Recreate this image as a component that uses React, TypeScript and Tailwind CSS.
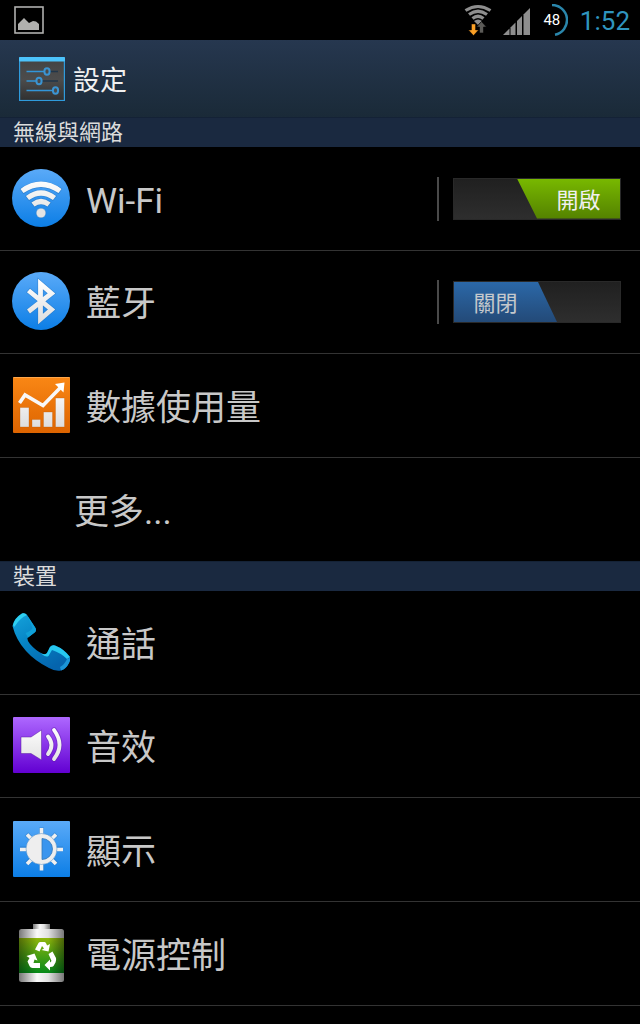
import { useState } from 'react'
import type { ReactNode } from 'react'
import { clsx } from 'clsx'

/* Status bar icons */

function PictureIcon() {
  return (
    <svg className="w-[30px] h-[28px]" viewBox="0 0 30 28" aria-hidden="true">
      <rect x="1" y="1" width="28" height="26" fill="none" stroke="#b0b0ae" strokeWidth="1.6" />
      <path d="M4 24v-6l6-6 5 5 4-2 3 .5 3 2.500V24z" fill="#b0b0ae" />
    </svg>
  )
}

function WifiStatusIcon() {
  return (
    <svg className="w-[28px] h-[32px]" viewBox="0 0 28 32" aria-hidden="true">
      <g fill="none" stroke="#8e8e8e" strokeWidth="3.2">
        <path d="M1.500 6.500Q14-1.500 26.500 6.500" />
        <path d="M5 10.500Q14 4 23 10.500" />
        <path d="M8.500 14.500Q14 10 19.500 14.500" />
      </g>
      <path d="M10 17Q14 14 18 17L14 21z" fill="#8e8e8e" />
      <path d="M7.500 20h4v6h3L9.500 31.500 4.500 26h3z" fill="#fba026" stroke="#000" strokeWidth=".4" />
      <path d="M15.500 29v-6H12.500l5-5.500 5 5.500h-3v6z" fill="#5c5b58" stroke="#000" strokeWidth=".6" />
    </svg>
  )
}

function SignalIcon() {
  return (
    <svg className="w-[27px] h-[27px]" viewBox="0 0 27 27" fill="#8e8e8e" aria-hidden="true">
      <path d="M0 27l6.500-6.500V27z" />
      <path d="M7.500 27v-7.500L12.500 14.500V27z" />
      <path d="M14 27V13l5-5v19z" />
      <path d="M20.500 27V6.500L27 0v27z" />
    </svg>
  )
}

/* Settings icons */

function SlidersIcon() {
  return (
    <svg className="w-[46px] h-[44px]" viewBox="0 0 46 44" aria-hidden="true">
      <defs>
        <linearGradient id="panel" x1="0" y1="0" x2="0" y2="1">
          <stop offset="0" stopColor="#434343" />
          <stop offset=".5" stopColor="#4c4c4c" />
          <stop offset="1" stopColor="#303030" />
        </linearGradient>
      </defs>
      <rect x=".6" y="1" width="44.800" height="42.500" fill="url(#panel)" stroke="#2f9bdc" strokeWidth="1.200" />
      <rect x="0" y="0" width="46" height="4.500" rx="1" fill="#4cc3fb" />
      <g strokeWidth="1.600">
        <path d="M27 14.500h12M19 24h20" stroke="#20364a" />
        <path d="M7.500 14.500H26M7.500 24H18M7.500 33.500H34" stroke="#3295d8" />
      </g>
      <g fill="#4a4a4a" stroke="#3b94d2" strokeWidth="2">
        <ellipse cx="28" cy="14.500" rx="2.600" ry="3.200" />
        <ellipse cx="20" cy="24" rx="2.600" ry="3.200" />
        <ellipse cx="36.500" cy="33.500" rx="2.600" ry="3.200" />
      </g>
    </svg>
  )
}

function Gradients() {
  return (
    <defs>
      <linearGradient id="blue" x1="0" y1="0" x2="0" y2="1">
        <stop offset="0" stopColor="#5aaaf8" />
        <stop offset="1" stopColor="#0c7ee6" />
      </linearGradient>
      <linearGradient id="orange" x1="0" y1="0" x2="0" y2="1">
        <stop offset="0" stopColor="#f98715" />
        <stop offset="1" stopColor="#dd6400" />
      </linearGradient>
      <linearGradient id="purple" x1="0" y1="0" x2="0" y2="1">
        <stop offset="0" stopColor="#ae68ff" />
        <stop offset="1" stopColor="#6200d2" />
      </linearGradient>
      <linearGradient id="white" gradientUnits="userSpaceOnUse" x1="0" y1="10" x2="0" y2="50">
        <stop offset="0" stopColor="#ffffff" />
        <stop offset="1" stopColor="#dedede" />
      </linearGradient>
      <linearGradient id="phone" x1="0" y1="0" x2=".6" y2="1">
        <stop offset="0" stopColor="#16a4dc" />
        <stop offset=".5" stopColor="#0583c4" />
        <stop offset="1" stopColor="#0564ad" />
      </linearGradient>
      <linearGradient id="metal" x1="0" y1="0" x2="1" y2="0">
        <stop offset="0" stopColor="#777" />
        <stop offset=".4" stopColor="#fafafa" />
        <stop offset=".65" stopColor="#e2e2e2" />
        <stop offset="1" stopColor="#777" />
      </linearGradient>
      <linearGradient id="charge" x1="0" y1="0" x2="0" y2="1">
        <stop offset="0" stopColor="#8fb60c" />
        <stop offset="1" stopColor="#068a1a" />
      </linearGradient>
      <linearGradient id="shade" x1="0" y1="0" x2="1" y2="0">
        <stop offset="0" stopColor="#000" stopOpacity=".4" />
        <stop offset=".4" stopColor="#000" stopOpacity="0" />
        <stop offset=".65" stopColor="#000" stopOpacity="0" />
        <stop offset="1" stopColor="#000" stopOpacity=".45" />
      </linearGradient>
    </defs>
  )
}

function RowIcon({ children }: { children: ReactNode }) {
  return (
    <svg className="w-[58px] h-[58px] shrink-0" viewBox="0 0 58 58" aria-hidden="true">
      <Gradients />
      {children}
    </svg>
  )
}

function WifiIcon() {
  return (
    <RowIcon>
      <circle cx="29" cy="29" r="29" fill="url(#blue)" />
      <g fill="none" stroke="#2872b8" strokeOpacity=".5" strokeWidth="6.500">
        <path d="M9.500 22.500Q29 8.500 48.500 22.500M15 29.500Q29 18.500 43 29.500M20.500 36Q29 29 37.500 36" />
      </g>
      <g fill="none" stroke="url(#white)" strokeWidth="5.200">
        <path d="M10 22Q29 8.500 48 22" />
        <path d="M15.500 29Q29 19 42.500 29" />
        <path d="M21 35.500Q29 29.500 37 35.500" />
      </g>
      <circle cx="29" cy="44" r="4.800" fill="#e4e4e4" stroke="#2872b8" strokeOpacity=".4" strokeWidth=".8" />
    </RowIcon>
  )
}

function BluetoothIcon() {
  return (
    <RowIcon>
      <circle cx="29" cy="29" r="29" fill="url(#blue)" />
      <path
        d="M16 18L39.500 37.500L28.500 47V12L39.500 21.500L16 40"
        fill="none"
        stroke="#2872b8"
        strokeOpacity=".5"
        strokeWidth="6"
      />
      <path
        d="M16.500 18.500L39.500 37.500L28.500 47V12L39.500 21.500L16.500 39.500"
        fill="none"
        stroke="url(#white)"
        strokeWidth="4.800"
      />
    </RowIcon>
  )
}

function ChartIcon() {
  return (
    <RowIcon>
      <rect x="1" y="1" width="57" height="56" rx="1" fill="url(#orange)" />
      <path d="M1.500 1.500h56" stroke="#ffa64a" />
      <g fill="url(#white)" stroke="#b95a08" strokeOpacity=".5" strokeWidth=".6">
        <path d="M8 31.500h9V51H8zM20 43.500h8.500V51H20zM31.500 36H40.500v15H31.500zM43.500 22h9v29h-9z" />
      </g>
      <path d="M7.500 27L13 19l18 10.500L48 12" fill="none" stroke="#f8f8f8" strokeWidth="3.600" />
      <path d="M52.500 6.500L51.500 16.500l-8.500-8.500z" fill="#fff" />
    </RowIcon>
  )
}

function PhoneIcon() {
  return (
    <RowIcon>
      <path
        d="M.5 13Q2 5 10 .5Q13-.5 15 2L23.500 15Q25 18 22 20L15.500 25Q15 28 18 31Q24 38 31 41Q34 42 35 40L38 34Q40 31.500 43 32.500Q52 36 58 44Q59 46 57 50Q54 56 49 57.500Q43 58.500 37 55Q23 48 14 38Q4 27 .5 13z"
        fill="url(#phone)"
      />
      <path d="M1 12Q3 5 10 .5Q13-.5 15 2Q8 5 3 13Q2 15 1 12z" fill="#2fd0f0" />
      <path d="M15 2L23.500 15Q25 18 22 20L16 24.500L13.500 20Q19 18 20.500 15z" fill="#0fa0d8" />
      <path d="M38 34Q40 31.500 43 32.500Q52 36 58 44L55 46Q49 40 40 37L36.500 43Q34 45 29 40.500Q34 42 35 40z" fill="#27c8f0" />
      <path d="M58 45Q58.500 47 57 50Q54 56 49 57.500L48 54Q53 51 55 46z" fill="#1b94d6" />
    </RowIcon>
  )
}

function SoundIcon() {
  return (
    <RowIcon>
      <rect x="1" y="1" width="57" height="56" rx="1" fill="url(#purple)" />
      <path d="M9 21h10l10.500-7v30L19 37.500H9z" fill="url(#white)" stroke="#5a1ca0" strokeOpacity=".5" />
      <g fill="none" strokeLinecap="round">
        <path d="M36 20.500Q43 29 36 38M42 14Q53 29 42 43" stroke="#5a1ca0" strokeOpacity=".4" strokeWidth="5.500" />
        <path d="M36 20.500Q43 29 36 38M42 14Q53 29 42 43" stroke="url(#white)" strokeWidth="3.800" />
      </g>
    </RowIcon>
  )
}

function BrightnessIcon() {
  return (
    <RowIcon>
      <rect x="1" y="1" width="57" height="56" rx="1" fill="url(#blue)" />
      <g stroke="#2872b8" strokeOpacity=".45" strokeWidth="5">
        <path d="M29.500 7.500v43M8 29h43M14.500 14l30 30M44.500 14l-30 30" />
      </g>
      <g stroke="#f0f0f0" strokeWidth="3.600">
        <path d="M29.500 8v6M29.500 44v6.500M8 29.500h6M45 29.500h6M15 14.500l5 5M39 39l5 5M44 14.500l-5 5M20 39l-5 5" />
      </g>
      <circle cx="29.500" cy="29" r="15.500" fill="#eee" stroke="#2872b8" strokeOpacity=".4" />
      <path d="M30 18.500a10.500 10.500 0 0 1 0 21z" fill="#3a95ee" stroke="#3478ba" strokeWidth=".8" />
    </RowIcon>
  )
}

function BatteryIcon() {
  return (
    <RowIcon>
      <rect x="21" y="0" width="17" height="7" fill="url(#metal)" />
      <rect x="7" y="5" width="45" height="53" rx="2.500" fill="url(#metal)" />
      <rect x="7" y="14" width="45" height="35" fill="url(#charge)" />
      <rect x="7" y="14" width="45" height="35" fill="url(#shade)" />
      {/* Recycling arrows */}
      <g fill="#fff">
        <path d="M23 25.500L26.500 19Q27 18 28.500 18H32.500Q34 18 35 21.500L38 20L36.500 27.500L29.500 26L32 24.500L30 22L27.500 27.500z" />
        <path d="M36.500 30L40.500 27.500L44 34Q44.500 36 43.500 38.500L41.500 42Q41 43 38 43V46.500L32.500 41L38 35.500V38.500L39.500 37z" />
        <path d="M28 39V44H20.500Q18.500 44 17.500 42L15.500 37.500L17.500 34L14.500 32L22.500 29.500L25.500 36.500L22.500 35.500L21.500 39z" />
      </g>
    </RowIcon>
  )
}

function Switch({ label, defaultOn }: { label: string; defaultOn: boolean }) {
  const [on, setOn] = useState(defaultOn)

  return (
    <div className="flex h-[44px] shrink-0 items-center border-l-2 border-[#4a4a4a] pl-[14px]">
      <label className="flex h-[42px] w-[168px] cursor-pointer border border-[#292929] bg-linear-to-b from-[#202020] to-[#2e2e2e]">
        <input
          type="checkbox"
          role="switch"
          aria-label={label}
          checked={on}
          onChange={() => setOn(!on)}
          className="sr-only"
        />
        <span
          className={clsx(
            'flex w-[103px] items-center justify-center pt-1 text-[22px] leading-[30px]',
            on
              ? 'ml-auto bg-linear-to-b from-[#78b800] to-[#548200] pl-5 text-[#f0f0f0] [clip-path:polygon(0_0,100%_0,100%_100%,20px_100%)]'
              : 'bg-linear-to-b from-[#2b68a8] to-[#234a78] pr-5 text-[#c4c8cc] [clip-path:polygon(0_0,84px_0,100%_100%,0_100%)]'
          )}
        >
          {on ? '開啟' : '關閉'}
        </span>
      </label>
    </div>
  )
}

type Item = {
  href: string
  label: string
  icon?: () => ReactNode
  defaultOn?: boolean
}

const sections: { title: string; items: Item[] }[] = [
  {
    title: '無線與網路',
    items: [
      { href: '#wifi', label: 'Wi-Fi', icon: WifiIcon, defaultOn: true },
      { href: '#bluetooth', label: '藍牙', icon: BluetoothIcon, defaultOn: false },
      { href: '#data-usage', label: '數據使用量', icon: ChartIcon },
      { href: '#more', label: '更多...' },
    ],
  },
  {
    title: '裝置',
    items: [
      { href: '#call', label: '通話', icon: PhoneIcon },
      { href: '#sound', label: '音效', icon: SoundIcon },
      { href: '#display', label: '顯示', icon: BrightnessIcon },
      { href: '#power', label: '電源控制', icon: BatteryIcon },
    ],
  },
]

function StatusBar() {
  return (
    <div className="flex h-10 items-center justify-between bg-black pl-[14px] pr-[10px]">
      <PictureIcon />
      <div className="flex items-center">
        <WifiStatusIcon />
        <div className="ml-[11px] pt-[2px]">
          <SignalIcon />
        </div>
        <div className="relative ml-[6px] flex h-8 w-8 items-center justify-center">
          <svg className="absolute inset-0 h-8 w-8" viewBox="0 0 32 32" aria-hidden="true">
            <path d="M16 1a15 15 0 0 1 3 29.700" fill="none" stroke="#2a86ab" strokeWidth="2.500" />
          </svg>
          <span className="text-[15px] leading-5 text-white">48</span>
        </div>
        <span className="ml-3 pt-[2px] text-[26px] leading-8 text-[#2f94be]">1:52</span>
      </div>
    </div>
  )
}

export default function App() {
  return (
    <div className="min-h-screen bg-black font-['Roboto','Noto_Sans_CJK_TC',sans-serif]">
      <StatusBar />

      <header className="flex h-[77px] items-center gap-2 bg-linear-to-b from-[#26374f] to-[#1a2a38] pl-[19px]">
        <SlidersIcon />
        <h1 className="pt-1 text-[27px] leading-9 text-[#f0f0f0]">設定</h1>
      </header>

      <main className="border-b border-[#333]">
        {sections.map(({ title, items }) => (
          <section key={title}>
            <h2 className="h-[30px] border-t border-[#142236] bg-[#1a2940] pl-[13px] text-[22px] leading-[30px] text-[#dcdcdc]">
              {title}
            </h2>
            <ul className="divide-y divide-[#333]">
              {items.map(({ href, label, icon: Icon, defaultOn }) => (
                <li key={href} className="flex items-center pr-[19px] odd:h-[104px] even:h-[103px]">
                  <a
                    href={href}
                    className={clsx('flex h-full flex-1 items-center gap-4 pb-[2px]', Icon ? 'pl-3' : 'pl-[74px]')}
                  >
                    {Icon && <Icon />}
                    <span className="pt-2 text-[35px] leading-[48px] text-[#c8c8c8]">{label}</span>
                  </a>
                  {defaultOn !== undefined && <Switch label={label} defaultOn={defaultOn} />}
                </li>
              ))}
            </ul>
          </section>
        ))}
      </main>
    </div>
  )
}
